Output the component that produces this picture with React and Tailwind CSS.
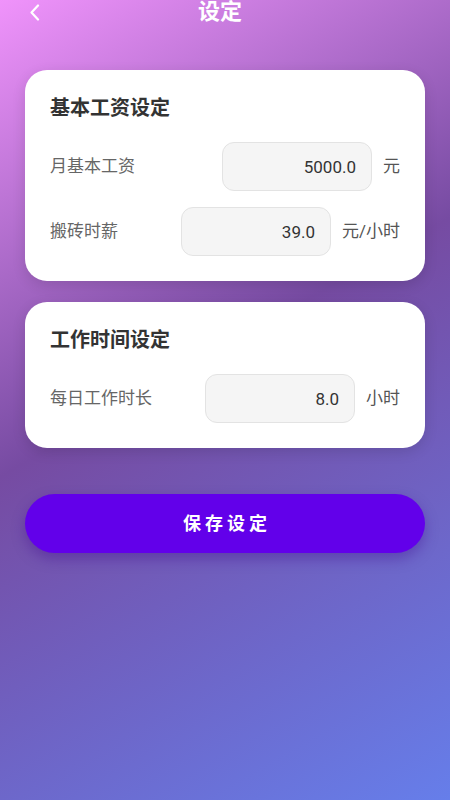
import React, { useState } from 'react';

const Field = ({ label, value, unit, onChange }) => (
  <div className="flex items-center">
    <span className="flex-1 text-[17px] text-[#666666]">{label}</span>
    <input
      type="text"
      value={value}
      onChange={(e) => onChange(e.target.value)}
      className="w-[150px] h-[49px] rounded-[12px] border border-[#e3e3e3] bg-[#f5f5f5] px-[15px] text-right text-[17px] text-[#333333] outline-none"
    />
    <span className="ml-[11px] text-[17px] text-[#555555]">{unit}</span>
  </div>
);

const App = () => {
  const [salary, setSalary] = useState('5000.0');
  const [hourly, setHourly] = useState('39.0');
  const [hours, setHours] = useState('8.0');

  return (
    <div
      className="min-h-[800px] w-full bg-[linear-gradient(150deg,#f093fb_0%,#764ba2_45%,#667eea_100%)] px-[25px]"
      style={{ fontFamily: 'Roboto, "Noto Sans CJK SC", sans-serif' }}
    >
      {/* header */}
      <div className="relative flex h-[24px] items-center justify-center">
        <button className="absolute left-[5px] top-[4px] p-0 text-white">
          <svg width="10" height="17" viewBox="0 0 10 17" fill="none" stroke="white" strokeWidth="2.2" strokeLinecap="round" strokeLinejoin="round">
            <path d="M8 1.5L1.5 8.5L8 15.5" />
          </svg>
        </button>
        <h1 className="mr-[10px] text-[22px] font-bold leading-none text-white">设定</h1>
      </div>

      <div className="mt-[46px] rounded-[22px] bg-white p-[25px] shadow-[0_4px_14px_rgba(0,0,0,0.12)]">
        <h2 className="mb-[20px] text-[20px] font-bold leading-[27px] text-[#333333]">基本工资设定</h2>
        <div className="flex flex-col gap-[16px]">
          <Field label="月基本工资" value={salary} unit="元" onChange={setSalary} />
          <Field label="搬砖时薪" value={hourly} unit="元/小时" onChange={setHourly} />
        </div>
      </div>

      <div className="mt-[21px] rounded-[22px] bg-white p-[25px] shadow-[0_4px_14px_rgba(0,0,0,0.12)]">
        <h2 className="mb-[20px] text-[20px] font-bold leading-[27px] text-[#333333]">工作时间设定</h2>
        <Field label="每日工作时长" value={hours} unit="小时" onChange={setHours} />
      </div>

      <button className="mt-[46px] flex h-[59px] w-full items-center justify-center rounded-[30px] bg-[#6200ea] text-[18px] font-bold tracking-[4px] text-white shadow-[0_6px_14px_rgba(60,0,140,0.35)]">
        <span className="pl-[4px]">保存设定</span>
      </button>
    </div>
  );
};

export default App;
